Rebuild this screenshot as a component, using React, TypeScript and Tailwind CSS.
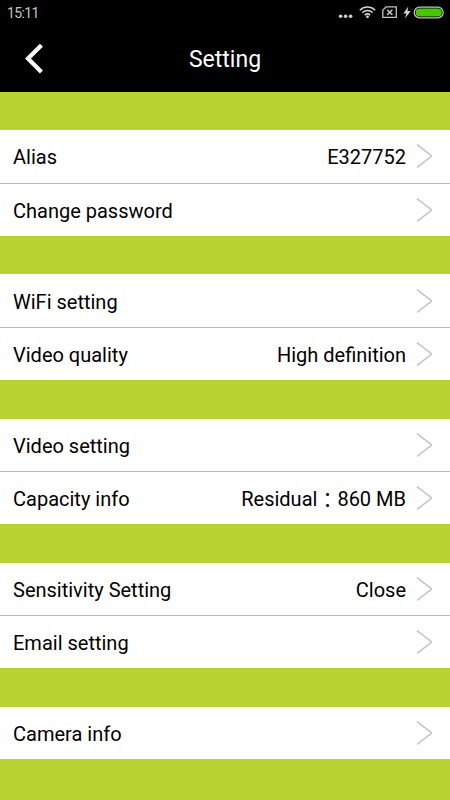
import type { ReactNode } from "react";

type Row = {
  label: string;
  value?: ReactNode;
};

const groups: Row[][] = [
  [{ label: "Alias", value: "E327752" }, { label: "Change password" }],
  [{ label: "WiFi setting" }, { label: "Video quality", value: "High definition" }],
  [
    { label: "Video setting" },
    {
      label: "Capacity info",
      value: (
        <>
          Residual<span className="inline-block translate-y-[2px]">：</span>860 MB
        </>
      ),
    },
  ],
  [{ label: "Sensitivity Setting", value: "Close" }, { label: "Email setting" }],
  [{ label: "Camera info" }],
];

function StatusBar() {
  return (
    <div className="flex h-[26px] items-center justify-between pl-[7px] pr-[6px] text-[#c4c4c4]">
      <span className="text-[14px] leading-none tracking-[-0.6px]">15:11</span>
      <svg width="106" height="26" viewBox="338 0 106 26" fill="none">
        <g fill="#d0d0d0">
          <circle cx="340.6" cy="16.2" r="1.8" />
          <circle cx="345.6" cy="16.2" r="1.8" />
          <circle cx="350.6" cy="16.2" r="1.8" />
        </g>
        {/* Wifi */}
        <g stroke="#d0d0d0" strokeWidth="1.5">
          <path d="M359.8 10.2a11 11 0 0 1 15.4 0" />
          <path d="M362.4 12.7a7.3 7.3 0 0 1 10.2 0" />
          <path d="M364.8 15.1a4 4 0 0 1 5.4 0" />
        </g>
        <circle cx="367.5" cy="16.8" r="1.4" fill="#d0d0d0" />
        {/* No SIM */}
        <path d="M386 6.8h10.3v10.6h-13.5v-7.2z" stroke="#c4c4c4" strokeWidth="1.3" />
        <path d="M387.2 9.7l5.2 5.2M392.4 9.7l-5.2 5.2" stroke="#c4c4c4" strokeWidth="1.5" />
        {/* Charging battery */}
        <path d="M408.3 6.5l-5 7h3l-1.3 5 5.7-7.4h-3.2z" fill="#d0d0d0" />
        <rect x="414.2" y="7.2" width="29" height="10.6" rx="5.3" stroke="#c4c4c4" strokeWidth="1.2" />
        <rect x="415.6" y="8.6" width="26.2" height="7.8" rx="3.9" fill="#46c800" />
      </svg>
    </div>
  );
}

function Header() {
  return (
    <div className="grid h-[65.5px] grid-cols-[1fr_auto_1fr] items-center">
      <svg className="ml-6" width="20" height="32" viewBox="0 0 20 32" fill="none">
        <path d="M17.4 2.3L4 15.6l13.4 13.3" stroke="#fff" strokeWidth="4.2" />
      </svg>
      <h1 className="pt-0.5 text-[23px] leading-7 text-white">Setting</h1>
    </div>
  );
}

function SettingRow({ label, value }: Row) {
  return (
    <li className="flex h-[53.4px] items-center pl-[13px] pr-[17px] text-[20px] leading-6 text-black last:h-[52.4px]">
      <span className="flex-1 pt-0.5">{label}</span>
      {value && <span className="pt-0.5">{value}</span>}
      <svg className="ml-[10px]" width="17" height="26" viewBox="0 0 17 26" fill="none">
        <path d="M1 1.7l14 10.7a.8.8 0 0 1 0 1.2L1 24.3" stroke="#c4c4c8" strokeWidth="1.5" />
      </svg>
    </li>
  );
}

export default function App() {
  return (
    <div className="h-[800px] w-[450px] overflow-hidden bg-[#b9d432] font-['Roboto','Noto_Sans_CJK_TC',sans-serif]">
      <header className="bg-black">
        <StatusBar />
        <Header />
      </header>
      <main className="flex flex-col gap-[38.4px] pt-[38.7px]">
        {groups.map((rows) => (
          <ul key={rows[0].label} className="flex flex-col divide-y divide-[#b9d432] bg-white">
            {rows.map((row) => (
              <SettingRow key={row.label} {...row} />
            ))}
          </ul>
        ))}
      </main>
    </div>
  );
}
